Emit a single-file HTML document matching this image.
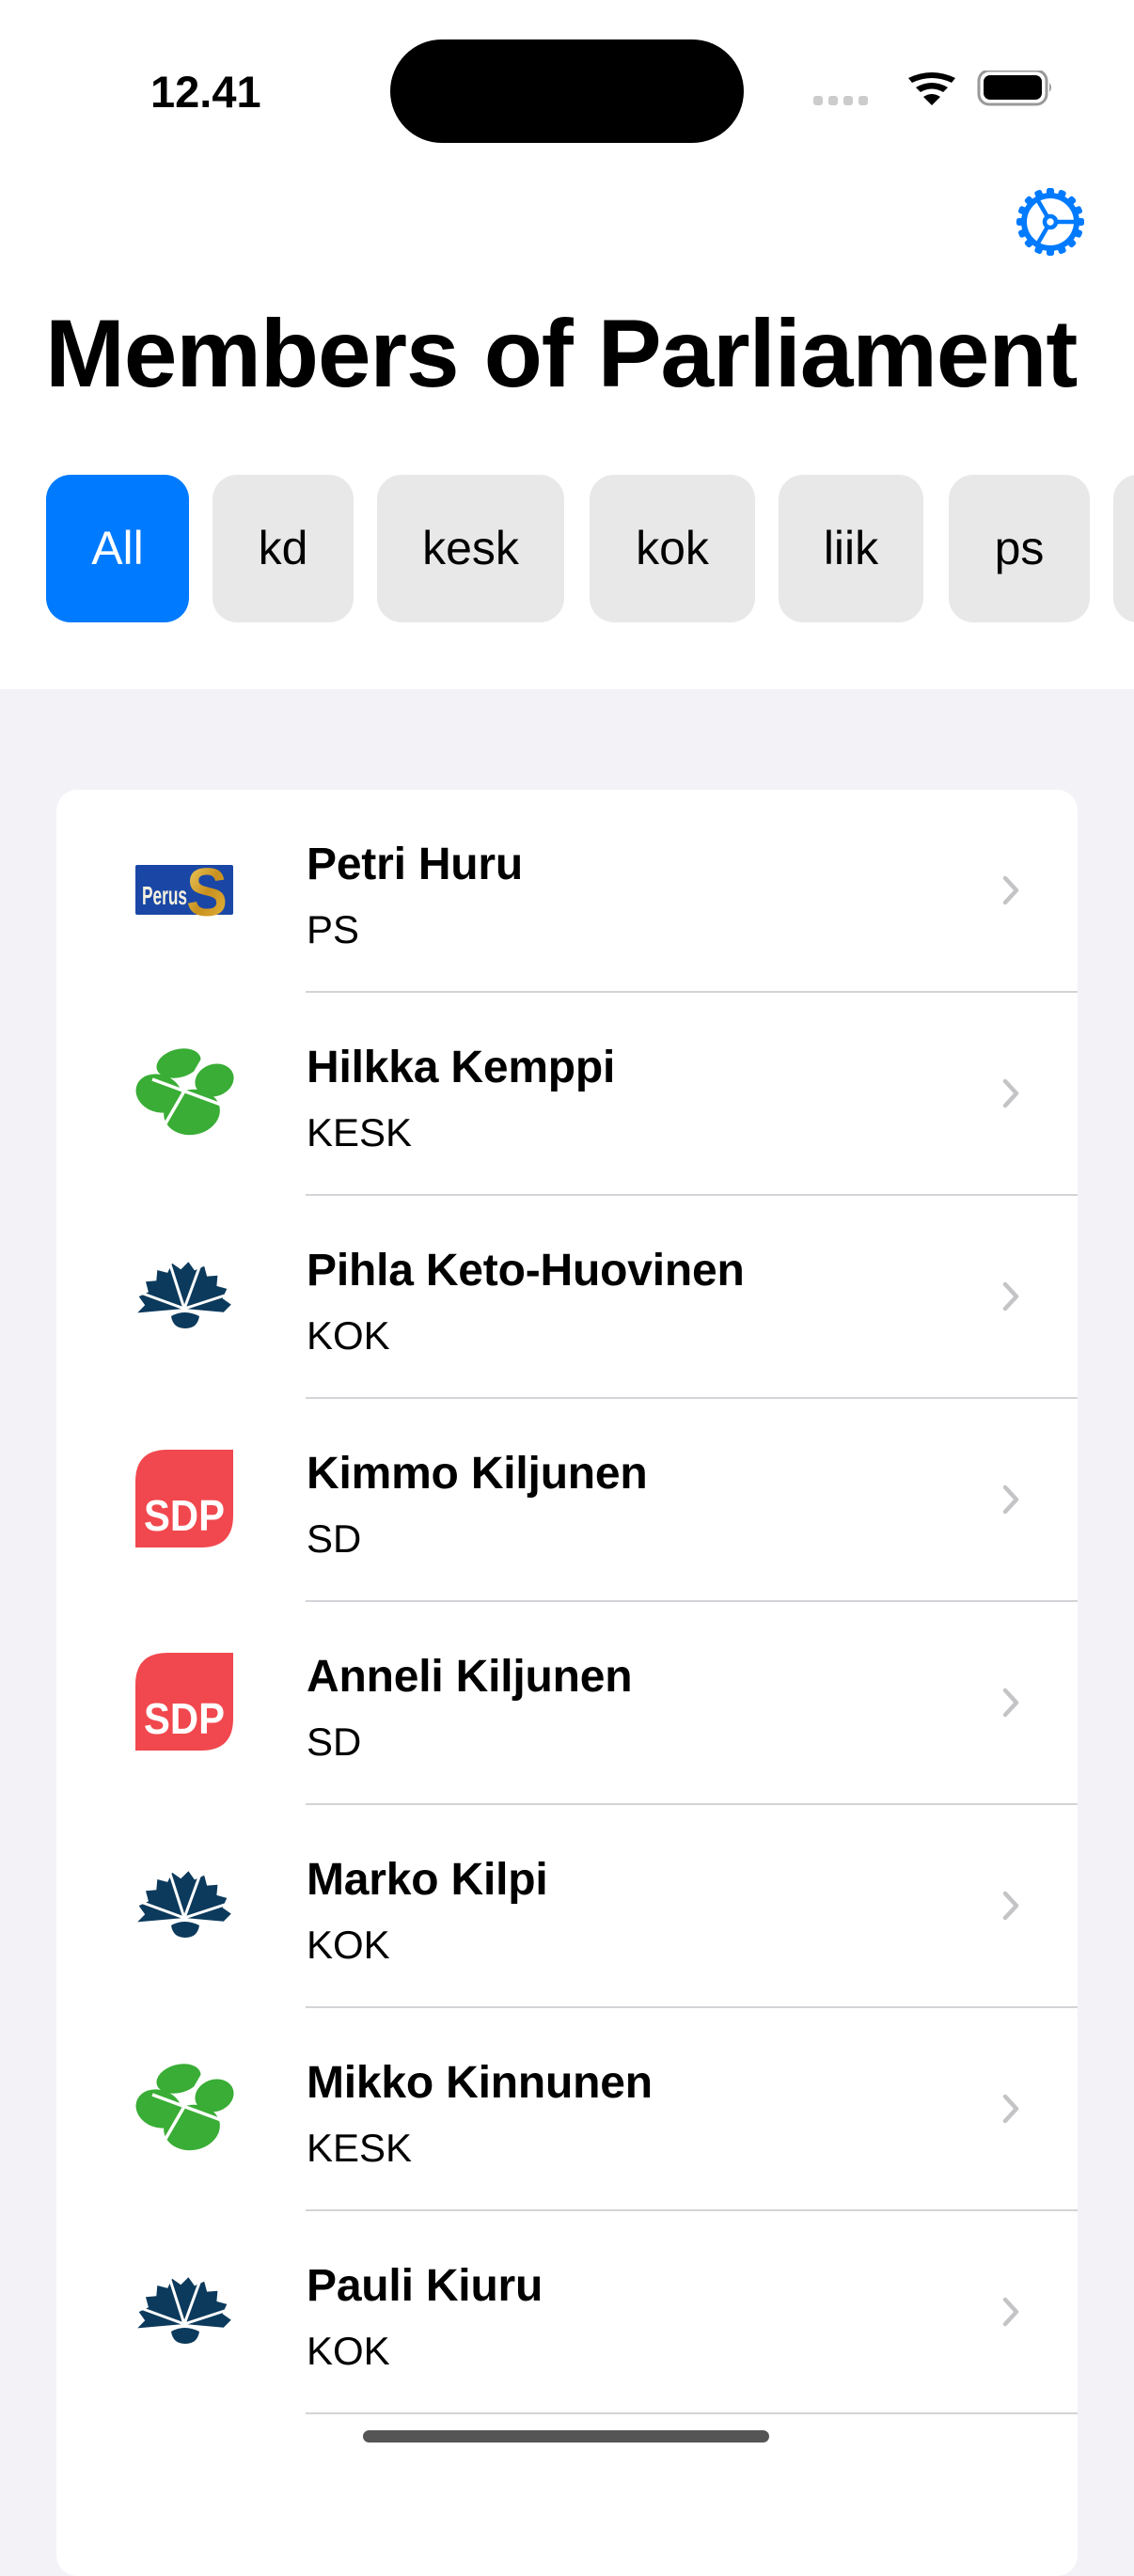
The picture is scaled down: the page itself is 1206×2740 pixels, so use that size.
<!DOCTYPE html>
<html><head><meta charset="utf-8"><style>
*{margin:0;padding:0;box-sizing:border-box}
body{width:1206px;height:2622px;overflow:hidden;background:#f2f2f7;font-family:"Liberation Sans",sans-serif;position:relative}
.top{position:absolute;left:0;top:0;width:1206px;height:733px;background:#fff}
.time{position:absolute;left:160px;top:70px;font-size:47px;font-weight:bold}
.island{position:absolute;left:415px;top:42px;width:376px;height:110px;border-radius:55px;background:#000}
.title{position:absolute;left:48px;top:316px;font-size:102px;font-weight:bold;letter-spacing:-1.2px;line-height:120px;white-space:nowrap}
.chip{position:absolute;top:505px;height:157px;border-radius:26px;background:#e8e8e8;font-size:50px;line-height:157px;text-align:center;color:#000}
.card{position:absolute;left:60px;top:840px;width:1086px;height:1900px;background:#fff;border-radius:22px;overflow:hidden}
.row{position:absolute;left:0;width:1086px;height:216px}
.sep{position:absolute;left:265px;right:0;bottom:0;height:2px;background:#d4d4d8}
.name{position:absolute;left:266px;top:52px;font-size:48px;font-weight:bold;white-space:nowrap;letter-spacing:-0.2px}
.sub{position:absolute;left:266px;top:125px;font-size:42px;white-space:nowrap}
.chev{position:absolute;left:1006px;top:91px}
.logo{position:absolute;left:84px;top:56px;width:104px;height:104px;overflow:visible}
.home{position:absolute;left:386px;top:2585px;width:432px;height:13px;border-radius:7px;background:#555}
</style></head><body>
<div class="top">
<div class="time">12.41</div>
<div class="island"></div>
<svg style="position:absolute;left:860px;top:75px" width="260" height="50" viewBox="0 0 260 50">
<g fill="#ccc"><rect x="5" y="27" width="10" height="10" rx="3"/><rect x="21" y="27" width="10" height="10" rx="3"/><rect x="37" y="27" width="10" height="10" rx="3"/><rect x="53" y="27" width="10" height="10" rx="3"/></g>
<path d="M106 8 Q131 -4 156 8 L152 13 Q131 3 110 13Z M114 18 Q131 8 148 18 L143 23 Q131 16 119 23Z M122 28 Q131 22 140 28 L131 37Z" fill="#000"/>
<rect x="181" y="0" width="72" height="36" rx="11" fill="none" stroke="#999" stroke-width="3"/>
<rect x="186" y="5" width="62" height="26" rx="7" fill="#000"/>
<path d="M256 13 Q260 18 256 23Z" fill="#999"/>
</svg>
<svg style="position:absolute;left:1080px;top:199px" width="74" height="74" viewBox="-37 -37 74 74">
<g fill="#007aff">
<circle r="31"/>
<rect x="-4" y="-36" width="8" height="9" rx="2.5"/><rect x="-4" y="-36" width="8" height="9" rx="2.5" transform="rotate(22.5)"/><rect x="-4" y="-36" width="8" height="9" rx="2.5" transform="rotate(45)"/><rect x="-4" y="-36" width="8" height="9" rx="2.5" transform="rotate(67.5)"/><rect x="-4" y="-36" width="8" height="9" rx="2.5" transform="rotate(90)"/><rect x="-4" y="-36" width="8" height="9" rx="2.5" transform="rotate(112.5)"/><rect x="-4" y="-36" width="8" height="9" rx="2.5" transform="rotate(135)"/><rect x="-4" y="-36" width="8" height="9" rx="2.5" transform="rotate(157.5)"/><rect x="-4" y="-36" width="8" height="9" rx="2.5" transform="rotate(180)"/><rect x="-4" y="-36" width="8" height="9" rx="2.5" transform="rotate(202.5)"/><rect x="-4" y="-36" width="8" height="9" rx="2.5" transform="rotate(225)"/><rect x="-4" y="-36" width="8" height="9" rx="2.5" transform="rotate(247.5)"/><rect x="-4" y="-36" width="8" height="9" rx="2.5" transform="rotate(270)"/><rect x="-4" y="-36" width="8" height="9" rx="2.5" transform="rotate(292.5)"/><rect x="-4" y="-36" width="8" height="9" rx="2.5" transform="rotate(315)"/><rect x="-4" y="-36" width="8" height="9" rx="2.5" transform="rotate(337.5)"/>
</g>
<circle r="25" fill="#fff"/>
<g stroke="#007aff" stroke-width="4.5" fill="none"><circle r="6"/><line x1="6" y1="0" x2="27" y2="0"/><line x1="-3" y1="-5.2" x2="-13.5" y2="-23.4"/><line x1="-3" y1="5.2" x2="-13.5" y2="23.4"/></g>
</svg>
<div class="title">Members of Parliament</div>
<div class="chip" style="left:49px;width:152px;background:#007aff;color:#fff">All</div>
<div class="chip" style="left:226px;width:150px">kd</div>
<div class="chip" style="left:401px;width:199px">kesk</div>
<div class="chip" style="left:627px;width:176px">kok</div>
<div class="chip" style="left:828px;width:154px">liik</div>
<div class="chip" style="left:1009px;width:150px">ps</div>
<div class="chip" style="left:1184px;width:150px"></div>
</div>

<svg width="0" height="0" style="position:absolute">
<defs>
<linearGradient id="gold" x1="0" y1="0" x2="1" y2="1"><stop offset="0" stop-color="#f3d46a"/><stop offset="0.5" stop-color="#c8901e"/><stop offset="1" stop-color="#e8b840"/></linearGradient>
<g id="ps"><rect x="0" y="24" width="104" height="53" rx="2" fill="#1a47a6"/><text x="7" y="66" font-family="Liberation Sans" font-weight="bold" font-size="28" fill="#f4f0e0" textLength="48" lengthAdjust="spacingAndGlyphs">Perus</text><text x="54" y="78" font-family="Liberation Sans" font-weight="bold" font-size="72" fill="url(#gold)" textLength="44" lengthAdjust="spacingAndGlyphs">S</text></g>
<g id="kesk"><g fill="#39ad35"><ellipse cx="46" cy="19" rx="24" ry="15" transform="rotate(-15 46 19)"/><ellipse cx="84" cy="37" rx="21" ry="17" transform="rotate(-20 84 37)"/><ellipse cx="25" cy="51" rx="25" ry="20" transform="rotate(20 25 51)"/><ellipse cx="60" cy="71" rx="30" ry="24" transform="rotate(-10 60 71)"/></g><g stroke="#fff" stroke-width="3.5"><line x1="18" y1="36" x2="110" y2="70"/><line x1="72" y1="14" x2="28" y2="90"/></g></g>
<g id="kok"><path fill="#0c3a5c" d="M52 64 L2.2 68.4 L10.2 60.3 L3.7 51.1 L13.9 46.2 L11 35.3 L22.3 34.3 L23.3 23 L34.2 25.9 L39.1 15.7 L48.3 22.2 L56.4 14.2 L62.9 23.4 L73.2 18.7 L76.1 29.6 L87.4 28.7 L86.4 39.9 L97.3 42.9 L92.6 53.1 L101.8 59.6 L93.8 67.7Z"/><path fill="#0c3a5c" d="M38 72 Q52 64 68 72 Q66 85 53 85 Q40 85 38 72Z"/><g stroke="#fff" stroke-width="3"><line x1="52" y1="64" x2="35" y2="11"/><line x1="52" y1="64" x2="71" y2="12"/><line x1="52" y1="64" x2="0" y2="45"/><line x1="52" y1="64" x2="104" y2="47"/></g></g>
<g id="sdp"><path d="M0 34 Q0 0 34 0 L104 0 L104 70 Q104 104 70 104 L0 104Z" fill="#f0484e"/><text x="9" y="86" font-family="Liberation Sans" font-weight="bold" font-size="46" fill="#fff" textLength="86" lengthAdjust="spacingAndGlyphs">SDP</text></g>
<path id="ch" d="M3 3 L15 16 L3 29" fill="none" stroke="#c4c4c7" stroke-width="4.5" stroke-linecap="round" stroke-linejoin="round"/>
</defs></svg>

<div class="card">
<div class="row" style="top:0"><svg class="logo" viewBox="0 0 104 104"><use href="#ps"/></svg><div class="name">Petri Huru</div><div class="sub">PS</div><svg class="chev" width="24" height="32"><use href="#ch"/></svg><div class="sep"></div></div>
<div class="row" style="top:216px"><svg class="logo" viewBox="0 0 104 104"><use href="#kesk"/></svg><div class="name">Hilkka Kemppi</div><div class="sub">KESK</div><svg class="chev" width="24" height="32"><use href="#ch"/></svg><div class="sep"></div></div>
<div class="row" style="top:432px"><svg class="logo" viewBox="0 0 104 104"><use href="#kok"/></svg><div class="name">Pihla Keto-Huovinen</div><div class="sub">KOK</div><svg class="chev" width="24" height="32"><use href="#ch"/></svg><div class="sep"></div></div>
<div class="row" style="top:648px"><svg class="logo" viewBox="0 0 104 104" style="top:54px"><use href="#sdp"/></svg><div class="name">Kimmo Kiljunen</div><div class="sub">SD</div><svg class="chev" width="24" height="32"><use href="#ch"/></svg><div class="sep"></div></div>
<div class="row" style="top:864px"><svg class="logo" viewBox="0 0 104 104" style="top:54px"><use href="#sdp"/></svg><div class="name">Anneli Kiljunen</div><div class="sub">SD</div><svg class="chev" width="24" height="32"><use href="#ch"/></svg><div class="sep"></div></div>
<div class="row" style="top:1080px"><svg class="logo" viewBox="0 0 104 104"><use href="#kok"/></svg><div class="name">Marko Kilpi</div><div class="sub">KOK</div><svg class="chev" width="24" height="32"><use href="#ch"/></svg><div class="sep"></div></div>
<div class="row" style="top:1296px"><svg class="logo" viewBox="0 0 104 104"><use href="#kesk"/></svg><div class="name">Mikko Kinnunen</div><div class="sub">KESK</div><svg class="chev" width="24" height="32"><use href="#ch"/></svg><div class="sep"></div></div>
<div class="row" style="top:1512px"><svg class="logo" viewBox="0 0 104 104"><use href="#kok"/></svg><div class="name">Pauli Kiuru</div><div class="sub">KOK</div><svg class="chev" width="24" height="32"><use href="#ch"/></svg><div class="sep"></div></div>
</div>
<div class="home"></div>
</body></html>
